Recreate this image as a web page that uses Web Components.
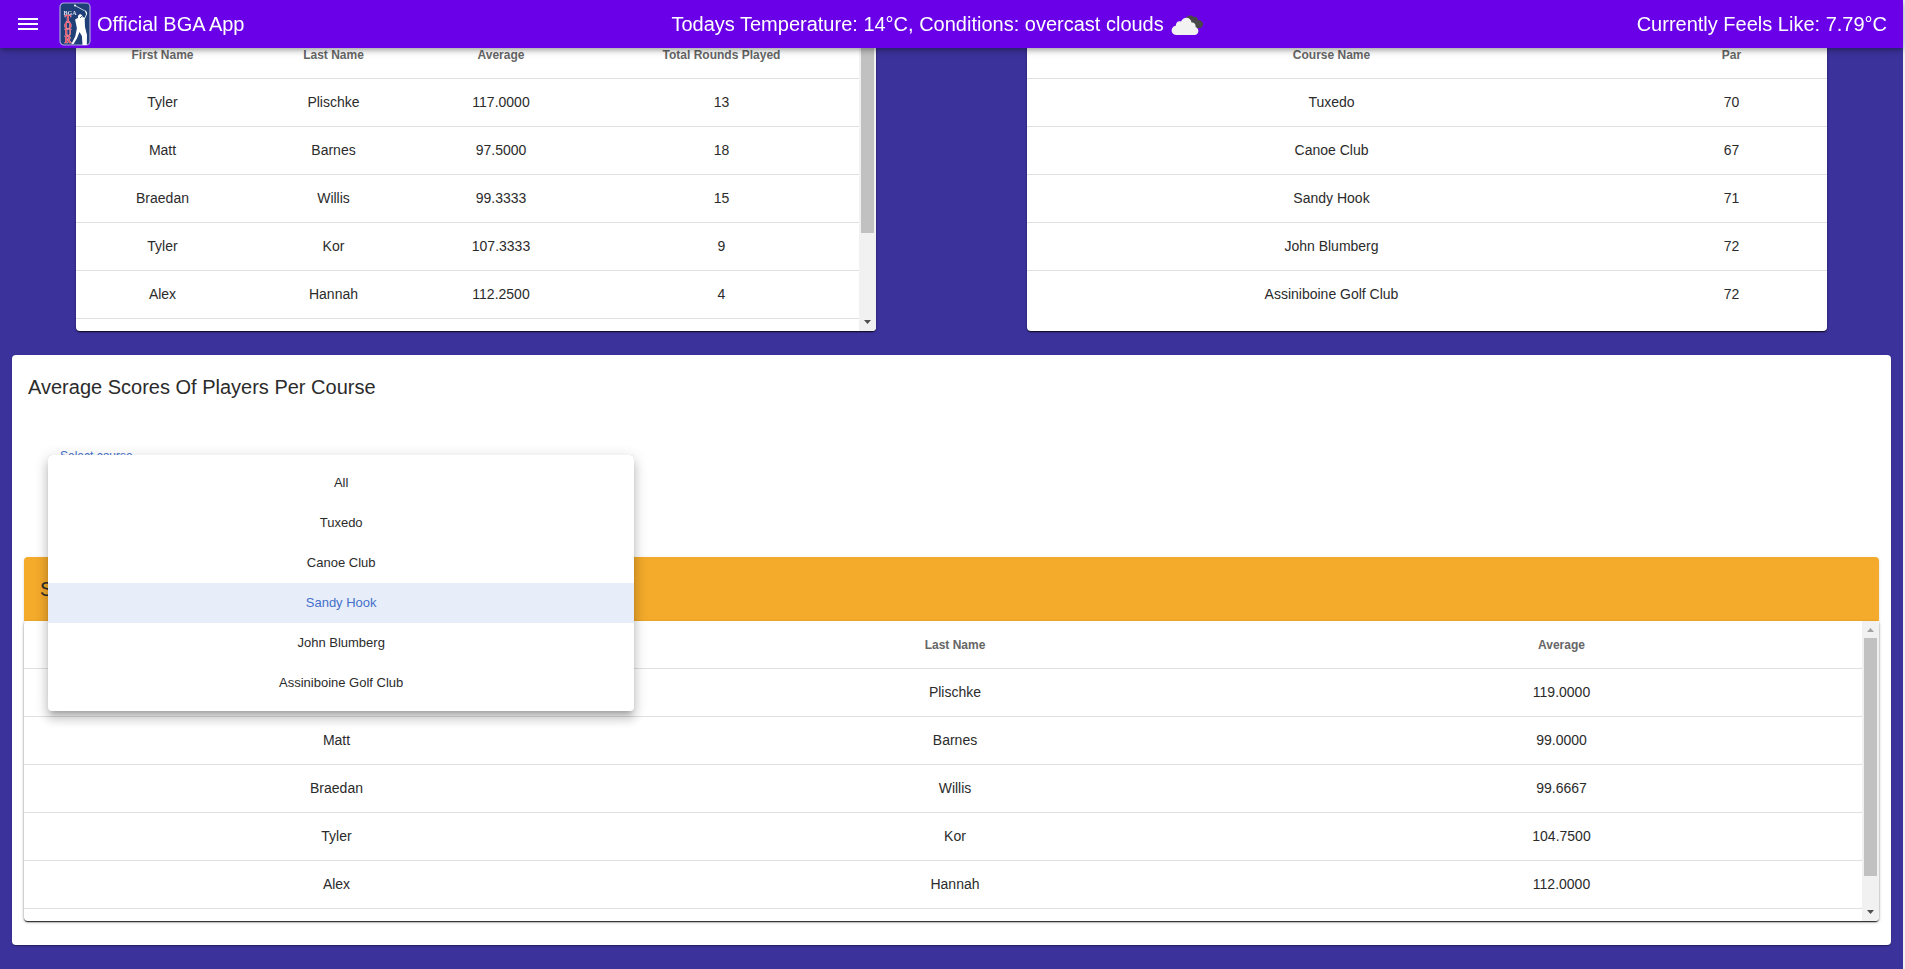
<!DOCTYPE html>
<html lang="en">
<head>
<meta charset="utf-8">
<title>Official BGA App</title>
<style>
  html { background: #f1f1f1; }
  body { margin: 0; font-family: "Liberation Sans", Arial, sans-serif; font-size: 14px; color: #212121; }
</style>
</head>
<body>
<bga-app></bga-app>

<template id="tpl-bar">
  <style>
    :host { display: flex; align-items: center; height: 48px; background: #6a00e8; color: #fff; font-size: 20px; line-height: 24px; white-space: nowrap;
      box-shadow: 0 2px 4px -1px rgba(0,0,0,.2), 0 4px 5px rgba(0,0,0,.14), 0 1px 10px rgba(0,0,0,.12); }
    section { display: flex; flex: 1 1 auto; align-items: center; }
    .start { padding: 0 2px 0 4px; }
    .middle { justify-content: center; }
    .end { justify-content: flex-end; padding-right: 16px; }
    button { width: 48px; height: 48px; padding: 12px; border: 0; background: none; color: inherit; cursor: pointer; }
    svg { display: block; flex: none; }
    h1 { margin: 0 0 0 6px; font: inherit; }
    .logo { margin: 0 0 0 7px; }
    p { margin: 0; }
  </style>
  <section class="start">
    <button type="button" aria-label="Open menu">
      <svg width="24" height="24" viewBox="0 0 24 24" fill="currentColor"><path d="M2 6h20v2H2zM2 11h20v2H2zM2 16h20v2H2z"/></svg>
    </button>
    <svg class="logo" width="32" height="44" viewBox="0 0 32 44" aria-hidden="true">
      <rect x="1" y="1" width="30" height="42" rx="4" fill="#1f3f78" stroke="#a9a8dc" stroke-width="1.2"/>
      <text x="4.500" y="12.500" font-family="Liberation Serif, serif" font-size="6" font-weight="700" fill="#dfe3f2">BGA</text>
      <g font-family="Liberation Serif, serif" font-size="9.500" font-weight="700" fill="#f0566a" stroke="#f0b4c0" stroke-width=".7" paint-order="stroke" text-anchor="middle">
        <text x="9" y="20">T</text><text x="9" y="27">O</text><text x="9" y="34">U</text><text x="9" y="41">R</text>
      </g>
      <path d="M16 3.500l9 5" stroke="#d5dcee" stroke-width=".9" fill="none"/>
      <circle cx="16" cy="3.600" r="1" fill="#fff"/>
      <path d="M25 7.500c2 1 3.500 3 3.100 4.500l-2.400 5.200.3 7.800 2 8-.2 10h-4.300l-.6-9-2.400-4-2.600 6.500-3.300 5.500-2.300.2 4-8 1.600-8-.8-4-1-4.800 3-1.600c-.8-2 .7-4 2.500-3.600 1.500.3 2.300 1.600 2 3l2.200.3 1.300-3.500-1.100-2.600z" fill="#fff"/>
      <path d="M24 13l-3 3" stroke="#1f3f78" stroke-width=".8"/>
    </svg>
    <h1>Official BGA App</h1>
  </section>
  <section class="middle">
    <p>Todays Temperature: 14°C, Conditions: overcast clouds</p>
    <svg width="48" height="48" viewBox="0 0 48 48" role="img" aria-label="Overcast clouds">
      <path d="M22 18c1-2.500 5-3.600 7.500-1 2.200-.6 4.500.5 4.500 3.300 2.500-.3 5 1 5 3.700 0 2.500-1.500 4-4 4h-8z" fill="#484848"/>
      <path d="M13 35c-7 0-7-8.500-1-9.500-.3-4 3.500-5 5-4 2-5.500 10-5 10.500 1 3 0 4.500 2 4 4.500 4.500 1.500 3.500 8-1 8z" fill="#f2f2f2"/>
    </svg>
  </section>
  <section class="end"><p>Currently Feels Like: 7.79°C</p></section>
</template>

<template id="tpl-table">
  <style>
    :host { display: flex; height: 300px; overflow: hidden; background: #fff; border-radius: 4px;
      box-shadow: 0 2px 1px -1px rgba(0,0,0,.5), 0 1px 1px rgba(0,0,0,.3), 0 1px 3px rgba(0,0,0,.3); }
    .view { flex: 1; min-width: 0; overflow: hidden; }
    table { width: 100%; table-layout: fixed; border-collapse: separate; border-spacing: 0; }
    th, td { box-sizing: border-box; height: 48px; padding: 0 16px; text-align: center; border-bottom: 1px solid #e0e0e0; }
    th { font-size: 12px; font-weight: 700; color: #666; }
    td { padding-bottom: 2px; font-size: 14px; color: #2b2b2b; }
    :host(:not([thumb])) tr:last-child td { border-bottom: 0; }
    .bar { display: none; flex: none; flex-direction: column; align-items: center; width: 17px; background: #f1f1f1; }
    :host([thumb]) .bar { display: flex; }
    .arrow { display: block; flex: none; width: 17px; height: 17px; }
    .track { flex: 1; width: 13px; }
    .thumb { background: #c1c1c1; }
  </style>
  <div class="view"><table><colgroup></colgroup><thead></thead><tbody></tbody></table></div>
  <div class="bar" aria-hidden="true">
    <svg class="arrow" viewBox="0 0 17 17"><path d="M5 11h7L8.500 7z" fill="#a3a3a3"/></svg>
    <div class="track"><div class="thumb"></div></div>
    <svg class="arrow" viewBox="0 0 17 17"><path d="M5 6h7l-3.500 4z" fill="#505050"/></svg>
  </div>
</template>

<template id="tpl-select">
  <style>
    :host { display: block; position: relative; }
    select { display: block; box-sizing: border-box; width: 100%; height: 56px; padding: 0 16px; border: 1px solid #4470c9; border-radius: 4px; background: #fff; font: inherit; color: #212121; appearance: none; }
    label { position: absolute; top: -7px; left: 8px; padding: 0 4px; background: #fff; color: #4470c9; font-size: 12px; line-height: 16px; }
    ul { position: absolute; top: 0; left: 0; right: 0; z-index: 2; margin: 0; padding: 8px 0; list-style: none; background: #fff; border-radius: 4px;
      box-shadow: 0 5px 5px -3px rgba(0,0,0,.2), 0 8px 10px 1px rgba(0,0,0,.14), 0 3px 14px 2px rgba(0,0,0,.12); }
    li { height: 40px; line-height: 40px; font-size: 13px; text-align: center; color: #2b2b2b; cursor: pointer; }
    li[aria-selected="true"] { background: #e8eef9; color: #4470c9; }
  </style>
  <select id="course"></select>
  <label for="course">Select course</label>
  <ul role="listbox" aria-label="Select course"></ul>
</template>

<template id="tpl-panel">
  <style>
    :host { display: block; background: #fff; border-radius: 4px;
      box-shadow: 0 2px 1px -1px rgba(0,0,0,.2), 0 1px 1px rgba(0,0,0,.14), 0 1px 3px rgba(0,0,0,.12); }
    h2 { margin: 0; padding: 20px 16px; font-size: 20px; line-height: 24px; font-weight: 400; color: #2b2b2b; }
    :host([accent]) h2 { background: #f4ab2b; border-radius: 4px 4px 0 0; }
  </style>
  <h2></h2>
  <slot></slot>
</template>

<template id="tpl-app">
  <style>
    :host { display: block; box-sizing: border-box; min-height: 100vh; margin-right: 2px; padding: 31px 12px 24px; background: #3c329c; }
    app-bar { position: fixed; top: 0; left: 0; right: 2px; z-index: 5; }
    .summary { display: grid; grid-template-columns: 1fr 1fr; gap: 151px; padding: 0 64px; margin-bottom: 24px; }
    .scores { padding-bottom: 24px; }
    .filters { display: grid; grid-template-columns: repeat(3, 1fr); padding: 36px 12px 46px; }
    course-select { margin: 0 8px 0 24px; }
    .result { margin: 0 12px; }
  </style>
  <app-bar></app-bar>
  <main>
    <div class="summary">
      <score-table thumb="185" widths="173,169,166,275" columns="First Name|Last Name|Average|Total Rounds Played"
        rows="Tyler|Plischke|117.0000|13;Matt|Barnes|97.5000|18;Braedan|Willis|99.3333|15;Tyler|Kor|107.3333|9;Alex|Hannah|112.2500|4"></score-table>
      <score-table widths="609,191" columns="Course Name|Par"
        rows="Tuxedo|70;Canoe Club|67;Sandy Hook|71;John Blumberg|72;Assiniboine Golf Club|72"></score-table>
    </div>
    <card-panel class="scores" heading="Average Scores Of Players Per Course">
      <div class="filters"><course-select value="Sandy Hook" options="All|Tuxedo|Canoe Club|Sandy Hook|John Blumberg|Assiniboine Golf Club"></course-select></div>
      <card-panel class="result" accent heading="Sandy Hook">
        <score-table thumb="238" widths="625,612,601" columns="|Last Name|Average"
          rows="|Plischke|119.0000;Matt|Barnes|99.0000;Braedan|Willis|99.6667;Tyler|Kor|104.7500;Alex|Hannah|112.0000"></score-table>
      </card-panel>
    </card-panel>
  </main>
</template>

<script>
  class Base extends HTMLElement {
    mount(id) {
      this.attachShadow({ mode: "open" }).append(document.getElementById(id).content.cloneNode(true));
      return this.shadowRoot;
    }
    list(name, sep = "|") { return (this.getAttribute(name) || "").split(sep); }
  }
  const make = (tag, text) => { const el = document.createElement(tag); if (text) el.textContent = text; return el; };

  customElements.define("app-bar", class extends Base {
    connectedCallback() { this.mount("tpl-bar"); }
  });

  customElements.define("score-table", class extends Base {
    connectedCallback() {
      const root = this.mount("tpl-table");
      for (const w of this.list("widths", ",")) {
        const col = make("col"); col.style.width = w + "px"; root.querySelector("colgroup").append(col);
      }
      const head = make("tr");
      for (const c of this.list("columns")) { const th = make("th", c); th.scope = "col"; head.append(th); }
      root.querySelector("thead").append(head);
      for (const row of this.list("rows", ";")) {
        const tr = make("tr");
        for (const cell of row.split("|")) tr.append(make("td", cell));
        root.querySelector("tbody").append(tr);
      }
      if (this.hasAttribute("thumb")) root.querySelector(".thumb").style.height = this.getAttribute("thumb") + "px";
    }
  });

  customElements.define("course-select", class extends Base {
    connectedCallback() {
      const root = this.mount("tpl-select"), value = this.getAttribute("value");
      const select = root.querySelector("select"), menu = root.querySelector("ul");
      for (const name of this.list("options")) {
        select.append(make("option", name));
        const li = make("li", name);
        li.setAttribute("role", "option");
        li.setAttribute("aria-selected", String(name === value));
        li.addEventListener("click", () => {
          select.value = name;
          for (const o of menu.children) o.setAttribute("aria-selected", String(o === li));
        });
        menu.append(li);
      }
      select.value = value;
    }
  });

  customElements.define("card-panel", class extends Base {
    connectedCallback() { this.mount("tpl-panel").querySelector("h2").textContent = this.getAttribute("heading"); }
  });

  customElements.define("bga-app", class extends Base {
    connectedCallback() { this.mount("tpl-app"); }
  });
</script>
</body>
</html>
